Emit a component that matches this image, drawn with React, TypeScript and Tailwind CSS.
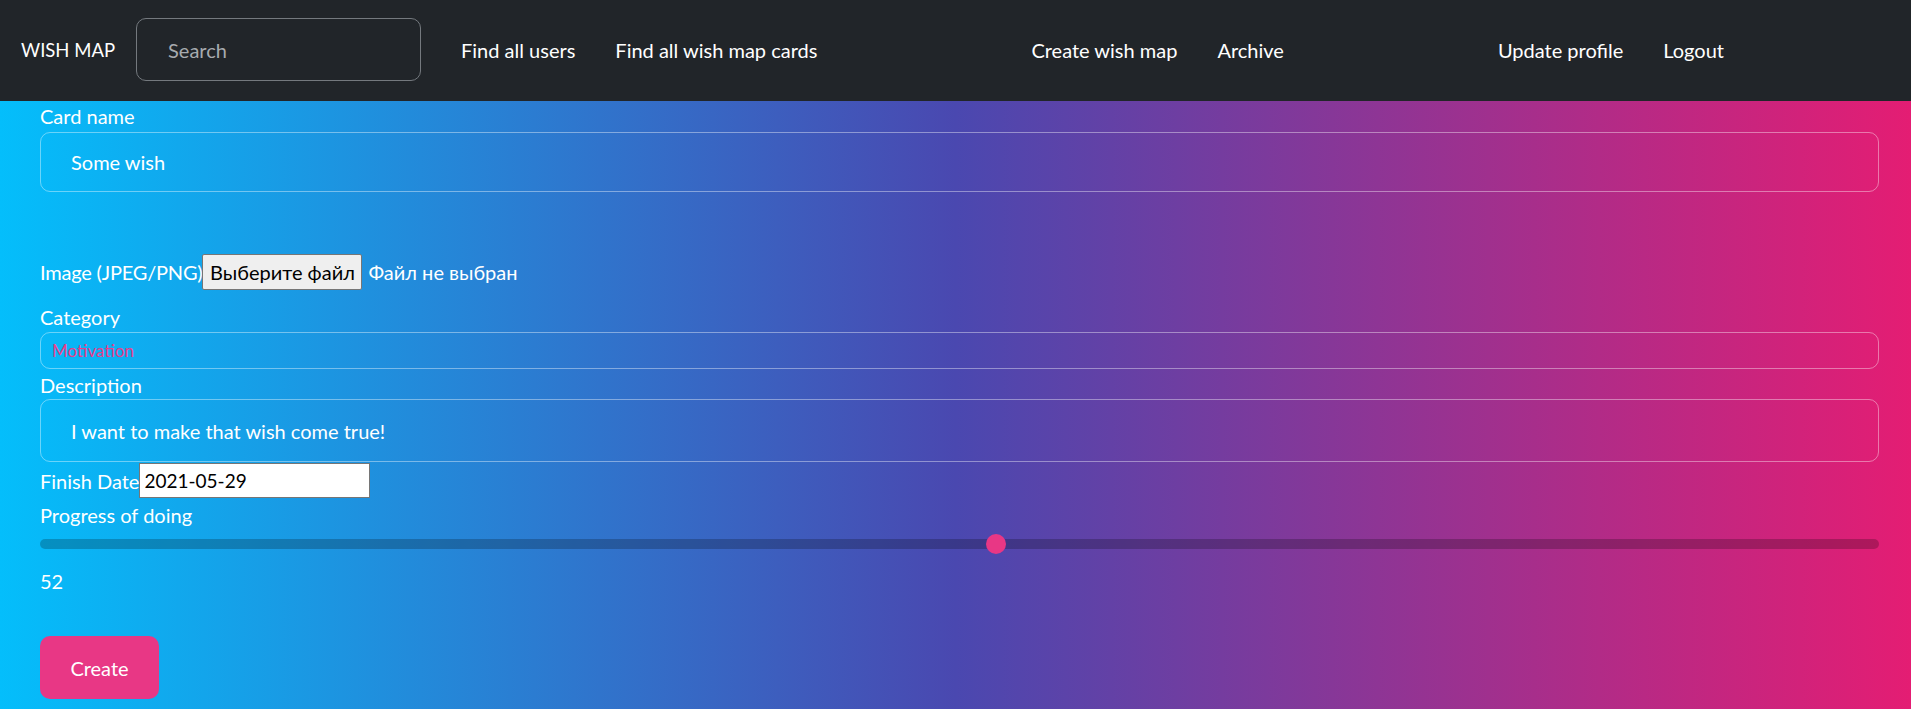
import React from 'react'

const NAV_GROUPS = [
  ['Find all users', 'Find all wish map cards'],
  ['Create wish map', 'Archive'],
  ['Update profile', 'Logout'],
]

const PROGRESS = 52

function Navbar() {
  return (
    <nav className="flex h-[101px] items-center bg-[#212529] pb-[2px] pl-[21px] text-[20px] text-white">
      <span className="text-[18.5px] leading-6">WISH MAP</span>
      <input
        type="text"
        placeholder="Search"
        className="ml-[21px] h-[63px] w-[285px] rounded-[10px] border border-[#74797e] bg-transparent pl-[31px] text-[20px] text-white outline-none placeholder:text-[#a7abaf]"
      />
      <div className="ml-[40px] flex gap-[214px]">
        {NAV_GROUPS.map((group, i) => (
          <ul key={i} className="flex gap-[40px]">
            {group.map((label) => (
              <li key={label}>
                <a href="#" className="leading-6 text-white">
                  {label}
                </a>
              </li>
            ))}
          </ul>
        ))}
      </div>
    </nav>
  )
}

function Slider({ value }: { value: number }) {
  return (
    <div className="flex h-[34px] items-center">
      <div className="relative h-[10px] w-full rounded-full bg-black/[0.22]">
        <span
          className="absolute top-1/2 h-[20px] w-[20px] -translate-x-1/2 -translate-y-1/2 rounded-full bg-[#e83785]"
          style={{ left: `calc(10px + ${value / 100} * (100% - 20px))` }}
        />
      </div>
    </div>
  )
}

export default function App() {
  return (
    <div className="min-h-[709px] font-['Lato','Noto_Sans',sans-serif]">
      <Navbar />
      <main className="flex min-h-[608px] flex-col bg-[linear-gradient(90deg,#04befb_0%,#4a48b0_50%,#e41d73_100%)] pl-[40px] pr-[32px] pt-[3px] text-[20px] leading-6 text-white">
        {/* Card name */}
        <label className="block">Card name</label>
        <div className="mt-[4px] flex h-[60px] items-center rounded-[10px] border border-white/40 pl-[30px]">
          Some wish
        </div>

        {/* Image */}
        <div className="mt-[62px] flex h-[36px] items-center">
          <span className="tracking-[-0.2px]">Image (JPEG/PNG)</span>
          <button className="flex h-[36px] w-[160px] items-center justify-center rounded-[2px] border border-[#767676] bg-[#efefef] text-[20px] text-black">
            Выберите файл
          </button>
          <span className="ml-[6px]">Файл не выбран</span>
        </div>

        {/* Category */}
        <label className="mt-[15px] block">Category</label>
        <div className="mt-[3px] flex h-[37px] items-center rounded-[10px] border border-white/40 pl-[11px] text-[17px] text-[#e83e8c]">
          Motivation
        </div>

        {/* Description */}
        <label className="mt-[4px] block">Description</label>
        <div className="mt-[2px] flex h-[63px] items-center rounded-[10px] border border-white/40 pl-[30px]">
          I want to make that wish come true!
        </div>

        {/* Finish date */}
        <div className="mt-[1px] flex h-[35px] items-center">
          <span>Finish Date</span>
          <div className="flex h-[35px] w-[231px] items-center border border-[#767676] bg-white pl-[4px] text-[19px] text-black">
            2021-05-29
          </div>
        </div>

        {/* Progress */}
        <label className="mt-[5px] block">Progress of doing</label>
        <Slider value={PROGRESS} />
        <span className="mt-[8px] block">{PROGRESS}</span>

        <button className="mt-[43px] mb-[10px] flex h-[63px] w-[119px] items-center justify-center rounded-[10px] bg-[#e83785] text-white">
          Create
        </button>
      </main>
    </div>
  )
}
